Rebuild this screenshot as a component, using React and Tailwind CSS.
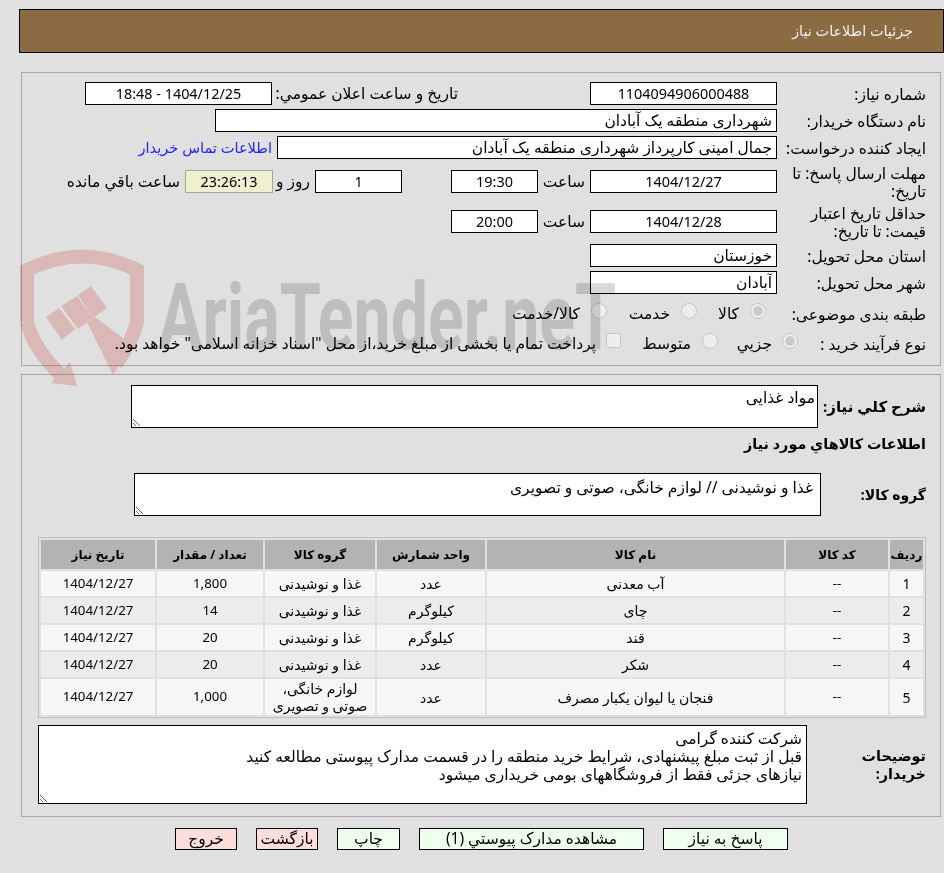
const rows = [
    { id: 1, name: "آب معدنی", unit: "عدد", group: "غذا و نوشیدنی", qty: "1,800" },
    { id: 2, name: "چای", unit: "کیلوگرم", group: "غذا و نوشیدنی", qty: "14" },
    { id: 3, name: "قند", unit: "کیلوگرم", group: "غذا و نوشیدنی", qty: "20" },
    { id: 4, name: "شکر", unit: "عدد", group: "غذا و نوشیدنی", qty: "20" },
    { id: 5, name: "فنجان یا لیوان یکبار مصرف", unit: "عدد", group: "لوازم خانگی، صوتی و تصویری", qty: "1,000" },
];

const headers = [
    { label: "رديف", width: "w-[33px]" },
    { label: "کد کالا", width: "w-[102px]" },
    { label: "نام کالا", width: "w-[297px]" },
    { label: "واحد شمارش", width: "w-[108px]" },
    { label: "گروه کالا", width: "w-[110px]" },
    { label: "تعداد / مقدار", width: "w-[106px]" },
    { label: "تاریخ نیاز", width: "w-[114px]" },
];

function Box({ value, width, center = true, tone = "border-black bg-white", className = "" }) {
    return (
        <input
            readOnly
            value={value}
            className={`h-[23px] shrink-0 border px-1 outline-none ${tone} ${width} ${center ? "text-center text-[14.4px]" : "text-right"} ${className}`}
        />
    );
}

function Row({ label, top, children, labelWidth = "w-[149px]" }) {
    return (
        <div className={`flex h-[23px] items-center ${top}`}>
            <div className={`shrink-0 whitespace-nowrap leading-[18px] ${labelWidth}`}>{label}</div>
            {children}
        </div>
    );
}

function Action({ label, width, red }) {
    return (
        <button className={`h-[22px] border border-black leading-none ${width} ${red ? "bg-[#ffdddd]" : "bg-[#eeffee]"}`}>
            {label}
        </button>
    );
}

function Watermark() {
    return (
        <div className="pointer-events-none absolute left-0 top-0 h-[400px] w-[944px] overflow-hidden mix-blend-multiply">
            <svg className="absolute left-0 top-0" width="944" height="400" viewBox="0 0 944 400">
                <path
                    d="M27 322 L27 270 Q82 243 137 270 L137 322 Q132 342 116 364 M27 322 Q34 350 62 376"
                    fill="none"
                    stroke="#fad2d2"
                    strokeWidth="14"
                />
                <polygon points="70,362 77,386 51,383" fill="#fad2d2" />
                <polygon points="46,317 59,308 75,329 62,340" fill="#fad2d2" />
                <polygon points="61,306 77,296 93,318 78,329" fill="#fad2d2" />
                <polygon points="78,295 91,286 107,308 93,318" fill="#fad2d2" />
                <polygon points="87,322 95,317 132,345 113,375" fill="#fad2d2" />
            </svg>
            <div
                dir="ltr"
                className="absolute left-[158px] top-[268px] origin-left scale-x-[0.72] whitespace-nowrap font-['Roboto',sans-serif] text-[92px] font-bold leading-[100px] text-[#d9d9d9]"
            >
                AriaTender.neT
            </div>
        </div>
    );
}

export default function App() {
    return (
        <div
            dir="rtl"
            className="relative h-[873px] overflow-hidden bg-[#e0e0e0] font-['Noto_Sans','DejaVu_Sans',sans-serif] text-[15.5px] text-black"
        >
            <div className="ml-[19px] mt-[9px] flex h-[44px] items-center border border-black bg-[#8b6b42] pr-[30px] text-[14.4px] text-[#f0f0f0]">
                جزئیات اطلاعات نیاز
            </div>

            <div className="ml-[21px] mr-[3px] mt-[19px] h-[294px] border border-[#a8a8a8] pr-[14px]">
                <Row label="شماره نیاز:" top="mt-[9px]">
                    <Box value="1104094906000488" width="w-[187px]" />
                    <div className="mr-[132px] w-[186px] shrink-0 whitespace-nowrap">تاریخ و ساعت اعلان عمومي:</div>
                    <Box value="1404/12/25 - 18:48" width="w-[187px]" />
                </Row>
                <Row label="نام دستگاه خریدار:" top="mt-[4px]">
                    <Box value="شهرداری منطقه یک آبادان" width="w-[562px]" center={false} />
                </Row>
                <Row label="ایجاد کننده درخواست:" top="mt-[4px]">
                    <Box value="جمال امینی کارپرداز شهرداری منطقه یک آبادان" width="w-[500px]" center={false} />
                    <a className="mr-[5px] whitespace-nowrap text-[14.6px] text-[#2222ff]">اطلاعات تماس خریدار</a>
                </Row>
                <Row
                    label={
                        <>
                            مهلت ارسال پاسخ: تا
                            <br />
                            تاریخ:
                        </>
                    }
                    top="mt-[11px]"
                >
                    <Box value="1404/12/27" width="w-[187px]" />
                    <div className="mr-[5px] w-[47px] shrink-0">ساعت</div>
                    <Box value="19:30" width="w-[87px]" />
                    <Box value="1" width="w-[87px]" className="mr-[49px]" />
                    <div className="w-[42px] shrink-0 pr-[5px]">روز و</div>
                    <Box value="23:26:13" width="w-[88px]" tone="border-[#a8a88c] bg-[#f0f0d0]" />
                    <div className="mr-[5px] whitespace-nowrap">ساعت باقي مانده</div>
                </Row>
                <Row
                    label={
                        <>
                            حداقل تاریخ اعتبار
                            <br />
                            قیمت: تا تاریخ:
                        </>
                    }
                    top="mt-[17px]"
                >
                    <Box value="1404/12/28" width="w-[187px]" />
                    <div className="mr-[5px] w-[47px] shrink-0">ساعت</div>
                    <Box value="20:00" width="w-[87px]" />
                </Row>
                <Row label="استان محل تحویل:" top="mt-[11px]">
                    <Box value="خوزستان" width="w-[187px]" center={false} />
                </Row>
                <Row label="شهر محل تحویل:" top="mt-[4px]">
                    <Box value="آبادان" width="w-[187px]" center={false} />
                </Row>

                <Row label="طبقه بندی موضوعی:" top="mt-[8px]">
                    <div className="flex w-[80px] shrink-0 items-center">
                        <input type="radio" disabled defaultChecked className="m-0 mr-[11px] h-4 w-4 -translate-y-[3px]" />
                        <span className="mr-[11px]">کالا</span>
                    </div>
                    <div className="flex w-[90px] shrink-0 items-center">
                        <input type="radio" disabled className="m-0 h-4 w-4 -translate-y-[3px]" />
                        <span className="mr-[11px]">خدمت</span>
                    </div>
                    <div className="flex shrink-0 items-center">
                        <input type="radio" disabled className="m-0 h-4 w-4 -translate-y-[3px]" />
                        <span className="mr-[11px]">کالا/خدمت</span>
                    </div>
                </Row>
                <Row label="نوع فرآیند خرید :" top="mt-[7px]" labelWidth="w-[128px]">
                    <div className="flex w-[80px] shrink-0 items-center">
                        <input type="radio" disabled defaultChecked className="m-0 h-4 w-4 -translate-y-[3px]" />
                        <span className="mr-[10px]">جزيي</span>
                    </div>
                    <div className="flex w-[97px] shrink-0 items-center">
                        <input type="radio" disabled className="m-0 h-4 w-4 -translate-y-[3px]" />
                        <span className="mr-[11px]">متوسط</span>
                    </div>
                    <div className="flex shrink-0 items-center whitespace-nowrap">
                        <input type="checkbox" disabled className="m-0 h-[15px] w-[15px] -translate-y-[3px]" />
                        <span className="mr-[10px]">
                            پرداخت تمام یا بخشی از مبلغ خرید،از محل "اسناد خزانه اسلامی" خواهد بود.
                        </span>
                    </div>
                </Row>
            </div>

            <div className="ml-[21px] mr-[3px] mt-[8px] h-[443px] border border-[#a8a8a8] pr-[14px]">
                <div className="mt-[10px] flex items-center">
                    <div className="w-[108px] shrink-0 text-[15px] font-bold">شرح كلي نياز:</div>
                    <textarea
                        readOnly
                        defaultValue="مواد غذایی"
                        className="h-[43px] w-[687px] border border-black bg-white px-[2px] outline-none"
                    />
                </div>
                <div className="mt-[4px] h-[24px] text-[14.4px] font-bold leading-[24px]">اطلاعات كالاهاي مورد نياز</div>
                <div className="mt-[17px] flex items-center">
                    <div className="w-[105px] shrink-0 text-[14px] font-bold">گروه کالا:</div>
                    <textarea
                        readOnly
                        defaultValue="غذا و نوشیدنی // لوازم خانگی، صوتی و تصویری"
                        className="h-[43px] w-[687px] border border-black bg-white px-[7px] pt-[2px] outline-none"
                    />
                </div>

                <table className="mt-[21px] w-[888px] table-fixed border-separate border-spacing-[2px] border border-[#c0c0c0] text-center text-[13.3px]">
                    <thead>
                        <tr>
                            {headers.map((header) => (
                                <th key={header.label} className={`h-[29px] bg-[#b3b3b3] p-0 text-[12px] font-bold ${header.width}`}>
                                    {header.label}
                                </th>
                            ))}
                        </tr>
                    </thead>
                    <tbody>
                        {rows.map((row) => {
                            const bg = row.id % 2 === 1 ? "bg-[#f6f6f6]" : "bg-[#ececec]";
                            return (
                                <tr key={row.id} className={row.id === 5 ? "h-[36px]" : "h-[25px]"}>
                                    <td className={`p-0 text-[14px] ${bg}`}>{row.id}</td>
                                    <td className={`p-0 ${bg}`}>--</td>
                                    <td className={`p-0 text-[14px] ${bg}`}>{row.name}</td>
                                    <td className={`p-0 text-[14px] ${bg}`}>{row.unit}</td>
                                    <td className={`px-[7px] py-0 text-[14px] leading-[17px] ${bg}`}>{row.group}</td>
                                    <td className={`p-0 ${bg}`}>{row.qty}</td>
                                    <td className={`p-0 ${bg}`}>1404/12/27</td>
                                </tr>
                            );
                        })}
                    </tbody>
                </table>

                <div className="mt-[7px] flex items-center">
                    <div className="w-[119px] shrink-0 text-[14.4px] font-bold leading-[18px]">
                        توضیحات
                        <br />
                        خریدار:
                    </div>
                    <textarea
                        readOnly
                        defaultValue={
                            "شرکت کننده گرامی\nقبل از ثبت مبلغ پیشنهادی، شرایط خرید منطقه را در قسمت مدارک پیوستی مطالعه کنید\nنیازهای جزئی فقط از فروشگاههای بومی خریداری میشود"
                        }
                        className="h-[79px] w-[769px] border border-black bg-white px-1 pt-[3px] leading-[18px] outline-none"
                    />
                </div>
            </div>

            <div className="mr-[156px] mt-[11px] flex gap-[19px]">
                <Action label="پاسخ به نیاز" width="w-[125px]" />
                <Action label="مشاهده مدارک پیوستي (1)" width="w-[225px]" />
                <Action label="چاپ" width="w-[63px]" />
                <Action label="بازگشت" width="w-[62px]" red />
                <Action label="خروج" width="w-[62px]" red />
            </div>

            <Watermark />
        </div>
    );
}
